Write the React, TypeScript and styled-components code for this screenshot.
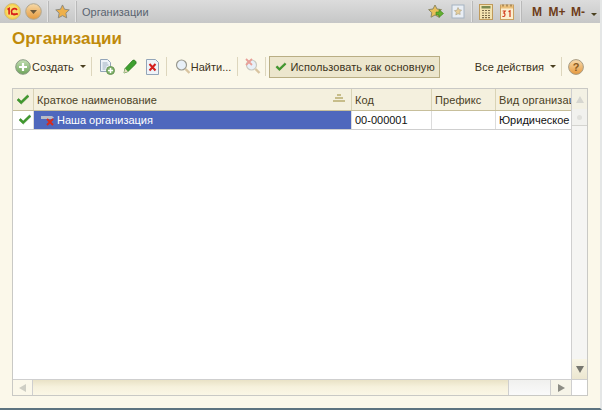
import React from "react";
import styled, { createGlobalStyle } from "styled-components";

const Global = createGlobalStyle`
  html, body { margin: 0; padding: 0; }
  body { width: 602px; height: 410px; overflow: hidden; background: #fbf8ea; font-family: "Liberation Sans", Arial, sans-serif; }
`;

const Page = styled.div`
  width: 602px; height: 410px; display: flex; flex-direction: column; overflow: hidden;
  box-sizing: border-box; border-bottom: 2px solid #5d7480; border-right: 2px solid #e4e6e6;
`;
const TopBar = styled.div`
  height: 23px; flex: none; display: flex; align-items: center; box-sizing: border-box; padding: 0 3px 0 3px;
  background: linear-gradient(#dcdcdc, #c6c7c7);
`;
const TopSep = styled.span<{ $m?: string }>`
  width: 1px; height: 21px; background: #e4e4e4; border-right: 1px solid #b9b9b9; margin: ${p => p.$m ?? "0 5px"}; flex: none;
`;
const TopTitle = styled.span`
  font-size: 11px; color: #5a6470; flex: 1;
`;
const IconSlot = styled.span<{ $ml?: number; $mr?: number }>`
  display: inline-flex; flex: none; margin-left: ${p => p.$ml ?? 0}px; margin-right: ${p => p.$mr ?? 0}px; align-items: center; justify-content: center;
`;
const MemButton = styled.span<{ $w: number }>`
  width: ${p => p.$w}px; font-size: 12px; font-weight: bold; color: #6e3d1a; flex: none; text-align: center;
`;
const Heading = styled.h1`
  margin: 6px 0 0 12px; height: 20px; font-size: 17px; line-height: 20px; font-weight: bold; color: #c08a0a; flex: none;
`;
const Toolbar = styled.div`
  height: 25px; margin: 5px 0 0 15px; width: 572px; display: flex; align-items: center; flex: none; font-size: 11px; color: #3b3320;
`;
const ToolText = styled.span`
  white-space: nowrap; color: #3b3320; font-size: 11px;
`;
const ToolSep = styled.span<{ $ml?: number; $mr?: number }>`
  width: 1px; height: 19px; background: #ddd6bd; margin: 0 ${p => p.$mr ?? 5}px 0 ${p => p.$ml ?? 5}px; flex: none;
`;
const Caret = styled.span<{ $ml?: number; $mt?: number }>`
  width: 0; height: 0; border: 3px solid transparent; border-top: 3px solid #4a4020; border-bottom: 0; margin-left: ${p => p.$ml ?? 6}px; margin-top: ${p => p.$mt ?? 0}px; flex: none;
`;
const MainAction = styled.button`
  height: 22px; width: 171px; padding: 0 0 0 5px; margin: 0; display: flex; align-items: center; gap: 3px; box-sizing: border-box;
  background: #ece6cd; border: 1px solid #b9ae84; font: 11px "Liberation Sans", Arial, sans-serif; letter-spacing: .08px; color: #3b3320; white-space: nowrap;
`;
const Spacer = styled.span`flex: 1;`;
const Grid = styled.div`
  margin: 9px 0 0 12px; width: 576px; height: 308px; box-sizing: border-box; flex: none;
  border: 1px solid #c9c9c5; background: #fff; display: grid;
  grid-template-columns: 558px 16px; grid-template-rows: 290px 16px; overflow: hidden;
`;
const TableArea = styled.div`display: flex; flex-direction: column; overflow: hidden; min-width: 0;`;
const Row = styled.div<{ $h: number; $head?: boolean }>`
  display: grid; grid-template-columns: 21px 318px 80px 64px 75px; height: ${p => p.$h}px; flex: none; box-sizing: border-box;
  background: ${p => p.$head ? "#f4f0de" : "#fff"};
  border-bottom: 1px solid ${p => p.$head ? "#c7bf9b" : "#cfcfcf"};
`;
const HeadCell = styled.div`
  font-size: 11px; color: #4a3f1e; padding-left: 3px; display: flex; align-items: center; border-right: 1px solid #d9d3b6;
  overflow: hidden; white-space: nowrap; position: relative; box-sizing: border-box; letter-spacing: .1px;
  &:last-child { border-right: 0; }
`;
const Cell = styled.div<{ $selected?: boolean }>`
  font-size: 11px; color: ${p => p.$selected ? "#fff" : "#111"}; background: ${p => p.$selected ? "#4f68bd" : "#fff"};
  padding-left: 3px; display: flex; align-items: center; border-right: 1px solid #dcdcdc; overflow: hidden; white-space: nowrap; box-sizing: border-box; gap: 2px;
  &:last-child { border-right: 0; }
`;
const CheckCell = styled(Cell)`padding-left: 5px;`;
const SortMark = styled.span`
  position: absolute; right: 6px; top: 5px; display: flex; flex-direction: column; align-items: center; gap: 1px;
`;
const SortBar = styled.i<{ $w: number }>`
  display: block; width: ${p => p.$w}px; height: 2px; background: #c7bd8a;
`;
const VScroll = styled.div`
  display: flex; flex-direction: column; border-left: 1px solid #cfcfcf; background: #f4f4f2; box-sizing: border-box;
`;
const ScrollBtn = styled.div<{ $bg: string; $h?: number; $w?: number; $divided?: boolean }>`
  height: ${p => p.$h ? p.$h + "px" : "auto"}; width: ${p => p.$w ? p.$w + "px" : "auto"}; flex: none; display: flex; align-items: center; justify-content: center; background: ${p => p.$bg}; box-sizing: border-box;
  border-right: ${p => p.$divided ? "1px solid #cfcfcf" : "0"};
`;
const ScrollFill = styled.div`flex: 1; background: #f5f5f3;`;
const Tri = styled.span<{ $dir: "up" | "down" | "left" | "right"; $c: string }>`
  width: 0; height: 0; border-style: solid; border-color: transparent;
  ${p => p.$dir === "up" && `border-width: 0 4px 7px 4px; border-bottom-color: ${p.$c};`}
  ${p => p.$dir === "down" && `border-width: 7px 4px 0 4px; border-top-color: ${p.$c};`}
  ${p => p.$dir === "left" && `border-width: 4px 7px 4px 0; border-right-color: ${p.$c};`}
  ${p => p.$dir === "right" && `border-width: 4px 0 4px 7px; border-left-color: ${p.$c};`}
`;
const VThumb = styled.div`
  height: 17px; flex: none; background: #f1f1ee; border-bottom: 1px solid #d4d4d0; display: flex; align-items: center; justify-content: center; box-sizing: border-box;
`;
const Dot = styled.i`display: block; width: 5px; height: 5px; border-radius: 50%; background: #e0e0dc;`;
const HScroll = styled.div`
  display: flex; border-top: 1px solid #cfcfcf; box-sizing: border-box; grid-column: 1;
`;
const HTrack = styled.div`flex: 1; background: linear-gradient(#e9e2c6, #f6f1dc 45%, #fbf7e6);`;
const HThumb = styled.div`
  width: 43px; flex: none; background: linear-gradient(#f0f0ee, #fafafa); border-left: 1px solid #cfcfcf; border-right: 1px solid #cfcfcf; box-sizing: border-box;
`;
const Corner = styled.div`background: #fff; border-left: 1px solid #cfcfcf; border-top: 1px solid #cfcfcf; box-sizing: border-box;`;

const Check = ({ size = 14 }: { size?: number }) => (
  <svg width={size} height={size * 0.8} viewBox="0 0 14 11"><path d="M1 6l1.7-1.6L5.2 7 11.4 1 13 2.4 5.2 10z" fill="#3f9a2d" stroke="#2c7a1e" strokeWidth=".5" /></svg>
);
const Logo1C = () => (
  <svg width="17" height="17" viewBox="0 0 17 17">
    <circle cx="8.5" cy="8.5" r="8" fill="#f7d148" stroke="#c9b98a" />
    <circle cx="8.5" cy="8.5" r="6.2" fill="#f7dc6e" />
    <path d="M3.5 6.5l1.6-1v6M13 7a3 3 0 1 0 0 3.2M14 11H7" fill="none" stroke="#d8201a" strokeWidth="1.6" />
  </svg>
);
const DownRound = () => (
  <svg width="17" height="17" viewBox="0 0 17 17">
    <defs><linearGradient id="dr" x1="0" y1="0" x2="0" y2="1"><stop offset="0" stopColor="#f6d9a8" /><stop offset="1" stopColor="#e59a3c" /></linearGradient></defs>
    <circle cx="8.5" cy="8.5" r="7.8" fill="url(#dr)" stroke="#b0a68e" />
    <path d="M5 7h7L8.5 11z" fill="#6d5a3a" />
  </svg>
);
const StarShape = ({ size = 16, fill = "#eeb04a", stroke = "#8a8a80" }: { size?: number; fill?: string; stroke?: string }) => (
  <svg width={size} height={size} viewBox="0 0 16 16"><path d="M8 1l2.2 4.6 5 .7-3.6 3.5.9 5L8 12.4l-4.5 2.4.9-5L.8 6.3l5-.7z" fill={fill} stroke={stroke} /></svg>
);
const StarArrow = () => (
  <svg width="16" height="16" viewBox="0 0 16 16">
    <path d="M7 1l2 4 4.5.6-3.2 3.1.8 4.5L7 11l-4 2.2.8-4.5L.6 5.6 5 5z" fill="#e9c05a" stroke="#8f8a66" />
    <path d="M8 8h3V5.6L15.5 9.5 11 13.4V11H8z" fill="#62b030" stroke="#3d7f1c" strokeWidth=".6" />
  </svg>
);
const StarDoc = () => (
  <svg width="14" height="15" viewBox="0 0 14 15">
    <rect x="1" y="1" width="12" height="13" fill="#e9eef4" stroke="#a5b3c2" />
    <path d="M7 3.5l1.1 2.3 2.5.3-1.8 1.8.4 2.5L7 9.7l-2.2 1.2.4-2.5-1.8-1.8 2.5-.3z" fill="#e8cf9a" stroke="#a89f84" strokeWidth=".6" />
  </svg>
);
const Calc = () => (
  <svg width="14" height="16" viewBox="0 0 14 16">
    <rect x=".5" y=".5" width="13" height="15" fill="#f3e3b0" stroke="#c09a5a" />
    <rect x="2.5" y="2" width="9" height="2.5" fill="#7a8a50" />
    <path d="M3 6.5h2M6 6.5h2M9 6.5h2M3 9h2M6 9h2M9 9h2M3 11.5h2M6 11.5h2M9 11.5h2M3 13.7h2M6 13.7h2M9 13.7h2" stroke="#7a6a48" strokeWidth="1.2" />
  </svg>
);
const Calendar = () => (
  <svg width="14" height="16" viewBox="0 0 14 16">
    <rect x=".5" y="1" width="13" height="14.5" fill="#fbeed0" stroke="#c9a060" />
    <rect x="1" y="1.5" width="12" height="3" fill="#ecc07a" />
    <path d="M3 .5v2M7 .5v2M11 .5v2" stroke="#7a5a2a" />
    <path d="M2.6 7h2.6L3.8 9c1.6 0 1.6 3.5-.2 3.5-.5 0-1-.2-1.2-.5M8.5 7.6 10 6.8V13" fill="none" stroke="#d23a1c" strokeWidth="1.2" />
  </svg>
);
const CreateIcon = () => (
  <svg width="16" height="16" viewBox="0 0 16 16">
    <defs><linearGradient id="cg" x1="0" y1="0" x2="0" y2="1"><stop offset="0" stopColor="#c3dfb4" /><stop offset="1" stopColor="#6ea45a" /></linearGradient></defs>
    <circle cx="8" cy="8" r="7.3" fill="url(#cg)" stroke="#8a9a84" />
    <path d="M8 4v8M4 8h8" stroke="#fff" strokeWidth="2.2" />
  </svg>
);
const CopyIcon = () => (
  <svg width="16" height="16" viewBox="0 0 16 16">
    <path d="M1.5.5h7l3 3v9h-10z" fill="#eef3f8" stroke="#93a5b8" />
    <path d="M3.5 4h5M3.5 6h6M3.5 8h4M3.5 10h3" stroke="#9fb0c0" />
    <circle cx="11.5" cy="11.5" r="4" fill="#7fb36a" stroke="#6b9558" />
    <path d="M11.5 9v5M9 11.5h5" stroke="#fff" strokeWidth="1.5" />
  </svg>
);
const PencilIcon = () => (
  <svg width="14" height="15" viewBox="0 0 14 15">
    <path d="M1 14l1-4.5L9.5 1.5c1-.7 2.2-.4 3 .5.8.9.9 2 .2 3L5 12.5z" fill="#3ea02f" stroke="#22701a" strokeWidth=".7" />
    <path d="M1 14l1-4.5 3 3z" fill="#e9dcc0" />
  </svg>
);
const DeleteDoc = () => (
  <svg width="13" height="16" viewBox="0 0 13 16">
    <path d="M.5.5h9l3 3v12H.5z" fill="#eef3f8" stroke="#93a5b8" />
    <path d="M3.5 5l6 6.5M9.5 5l-6 6.5" stroke="#d41e1e" strokeWidth="2" />
  </svg>
);
const Magnifier = ({ x }: { x?: boolean }) => (
  <svg width="16" height="17" viewBox="0 0 16 17">
    <circle cx="6.5" cy="7" r="5" fill="#e8f0f8" stroke={x ? "#c9c9c0" : "#9a9a90"} strokeWidth="1.2" />
    <path d="M10.5 11l4 4" stroke="#d8c4a0" strokeWidth="2.4" />
    {x && <path d="M1 1l6 6M7 1L1 7" stroke="#e8a098" strokeWidth="1.8" />}
  </svg>
);
const RowPic = () => (
  <svg width="14" height="11" viewBox="0 0 14 11">
    <path d="M0 1h11l2 1.5L11 4H0z" fill="#b7bcc7" />
    <path d="M6 4l6 6M12 4l-6 6" stroke="#d92a1a" strokeWidth="2" />
  </svg>
);
const Help = () => (
  <svg width="16" height="16" viewBox="0 0 16 16">
    <defs><linearGradient id="hg" x1="0" y1="0" x2="0" y2="1"><stop offset="0" stopColor="#f8dcae" /><stop offset="1" stopColor="#e6983c" /></linearGradient></defs>
    <circle cx="8" cy="8" r="7.4" fill="url(#hg)" stroke="#a89c84" />
    <text x="8" y="12" textAnchor="middle" fontSize="11" fontWeight="bold" fontFamily="Liberation Sans" fill="#8a5a20">?</text>
  </svg>
);

export default function App() {
  return (
    <Page>
      <Global />
      <TopBar>
        <IconSlot $ml={1}><Logo1C /></IconSlot>
        <IconSlot $ml={4}><DownRound /></IconSlot>
        <TopSep $m="0 6px 0 5px" />
        <IconSlot><StarShape size={15} /></IconSlot>
        <TopSep $m="0 5px 0 5px" />
        <TopTitle>Организации</TopTitle>
        <IconSlot><StarArrow /></IconSlot>
        <IconSlot $ml={7}><StarDoc /></IconSlot>
        <TopSep $m="0 6px 0 6px" />
        <IconSlot><Calc /></IconSlot>
        <IconSlot $ml={7}><Calendar /></IconSlot>
        <TopSep $m="0 6px 0 6px" />
        <MemButton $w={18}>M</MemButton>
        <MemButton $w={22}>M+</MemButton>
        <MemButton $w={20}>M-</MemButton>
        <Caret $ml={3} $mt={6} />
      </TopBar>
      <Heading>Организации</Heading>
      <Toolbar>
        <IconSlot $mr={1}><CreateIcon /></IconSlot>
        <ToolText>Создать</ToolText>
        <Caret />
        <ToolSep $ml={5} $mr={7} />
        <CopyIcon />
        <IconSlot $ml={8}><PencilIcon /></IconSlot>
        <IconSlot $ml={9}><DeleteDoc /></IconSlot>
        <ToolSep $ml={7} $mr={8} />
        <Magnifier />
        <ToolText>Найти...</ToolText>
        <ToolSep $ml={6} $mr={7} />
        <Magnifier x />
        <ToolSep $ml={4} $mr={3} />
        <MainAction><Check size={12} />Использовать как основную</MainAction>
        <Spacer />
        <ToolText>Все действия</ToolText>
        <Caret />
        <ToolSep $ml={5} $mr={6} />
        <IconSlot $mr={3}><Help /></IconSlot>
      </Toolbar>
      <Grid>
        <TableArea>
          <Row $h={22} $head>
            <HeadCell><Check /></HeadCell>
            <HeadCell>
              Краткое наименование
              <SortMark><SortBar $w={4} /><SortBar $w={8} /><SortBar $w={12} /></SortMark>
            </HeadCell>
            <HeadCell>Код</HeadCell>
            <HeadCell>Префикс</HeadCell>
            <HeadCell>Вид организации</HeadCell>
          </Row>
          <Row $h={19}>
            <CheckCell><Check /></CheckCell>
            <Cell $selected><IconSlot $ml={4}><RowPic /></IconSlot>Наша организация</Cell>
            <Cell>00-000001</Cell>
            <Cell />
            <Cell>Юридическое</Cell>
          </Row>
        </TableArea>
        <VScroll>
          <ScrollBtn $bg="#f3f1e4" $h={20}><Tri $dir="up" $c="#d6d6d0" /></ScrollBtn>
          <VThumb><Dot /></VThumb>
          <ScrollFill />
          <ScrollBtn $bg="linear-gradient(#f8f5e6,#ece7d0)" $h={20}><Tri $dir="down" $c="#77776f" /></ScrollBtn>
        </VScroll>
        <HScroll>
          <ScrollBtn $bg="#fbf8ea" $w={20} $divided><Tri $dir="left" $c="#cfcfc5" /></ScrollBtn>
          <HTrack />
          <HThumb />
          <ScrollBtn $bg="#f6f4e8" $w={20}><Tri $dir="right" $c="#8c8c84" /></ScrollBtn>
        </HScroll>
        <Corner />
      </Grid>
    </Page>
  );
}
